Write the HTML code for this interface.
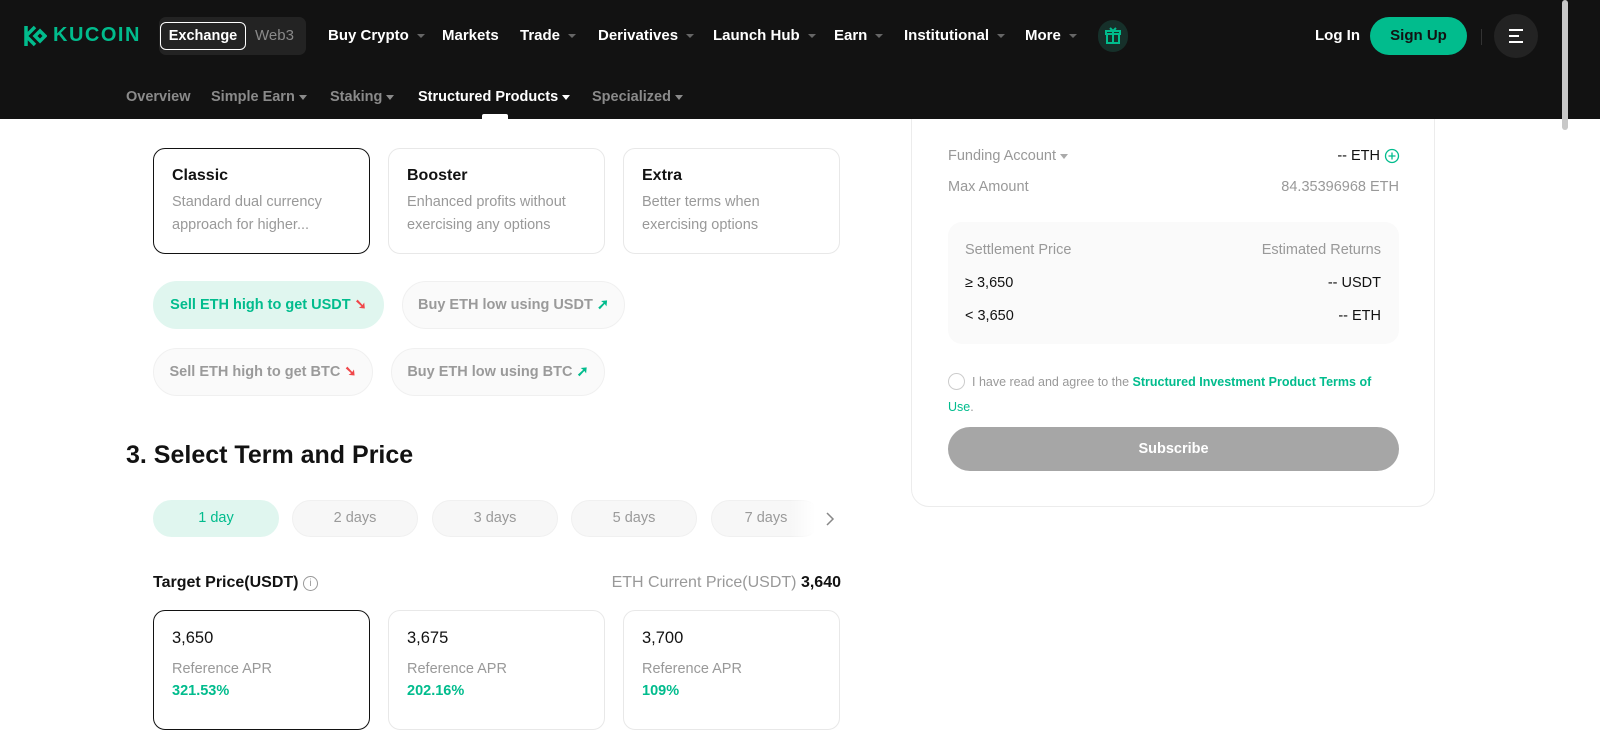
<!DOCTYPE html>
<html><head><meta charset="utf-8"><style>
*{box-sizing:border-box;margin:0;padding:0}
body{width:1600px;height:720px;overflow:hidden;background:#fff;font-family:"Liberation Sans",Arial,sans-serif;position:relative;color:#121212}
.hdr{position:absolute;left:0;top:0;width:1600px;height:119px;background:#121212}
.a{position:absolute;white-space:nowrap}
.nav{color:#fff;font-size:15px;font-weight:bold;top:27px}
.car{display:inline-block;width:0;height:0;border-left:4px solid transparent;border-right:4px solid transparent;border-top:4px solid #666;margin-left:8px;vertical-align:middle}
.sub{top:89px;font-size:14.5px;color:#8a8a8a;font-weight:bold}
.subc{display:inline-block;width:0;height:0;border-left:4px solid transparent;border-right:4px solid transparent;border-top:5px solid #8a8a8a;margin-left:4px;vertical-align:middle}
.card{position:absolute;border:1px solid #e8e8e8;border-radius:12px;background:#fff}
.card.sel{border:1px solid #121212}
.ct{position:absolute;left:18px;top:18px;font-size:16px;font-weight:bold;color:#121212}
.cd{position:absolute;left:18px;top:42px;font-size:14.5px;color:#999;line-height:23px}
.pill{position:absolute;height:48px;border-radius:24px;background:#fafafa;border:1px solid #f0f0f0;font-size:14.5px;font-weight:bold;color:#9a9a9a;line-height:46px;text-align:center}
.tp{position:absolute;top:500px;width:126px;height:37px;border-radius:19px;background:#f7f7f7;border:1px solid #f0f0f0;font-size:14.5px;color:#9a9a9a;line-height:35px;text-align:center}
.g{color:#01bc8d}
.rl{position:absolute;font-size:14.5px;white-space:nowrap}
</style></head><body>
<div class="a" style="left:911px;top:90px;width:524px;height:417px;border:1px solid #ececec;border-radius:18px"></div>
<div class="hdr"></div>
<svg class="a" style="left:23px;top:24px" width="24" height="24" viewBox="0 0 24 24"><path d="M3 2v20M3 12L12 3M3 12l9 9M12 12l5-5 5 5-5 5z" stroke="#01bc8d" stroke-width="3.5" fill="none"/></svg>
<div class="a" style="left:53px;top:24px;color:#01bc8d;font-size:20px;font-weight:bold;letter-spacing:1.5px">KUCOIN</div>
<div class="a" style="left:159px;top:17px;width:147px;height:38px;background:#232323;border-radius:7px"></div>
<div class="a" style="left:160px;top:22px;width:86px;height:28px;border:1.5px solid #fff;border-radius:6px;color:#fff;font-size:14.5px;font-weight:bold;text-align:center;line-height:26px">Exchange</div>
<div class="a" style="left:255px;top:27px;color:#8a8a8a;font-size:15px">Web3</div>
<div class="a nav" style="left:328px">Buy Crypto<span class="car"></span></div>
<div class="a nav" style="left:442px">Markets</div>
<div class="a nav" style="left:520px">Trade<span class="car"></span></div>
<div class="a nav" style="left:598px">Derivatives<span class="car"></span></div>
<div class="a nav" style="left:713px">Launch Hub<span class="car"></span></div>
<div class="a nav" style="left:834px">Earn<span class="car"></span></div>
<div class="a nav" style="left:904px">Institutional<span class="car"></span></div>
<div class="a nav" style="left:1025px">More<span class="car"></span></div>
<div class="a" style="left:1098px;top:20px;width:30px;height:32px;border-radius:15px;background:#16302a"></div>
<svg class="a" style="left:1104px;top:27px" width="18" height="18" viewBox="0 0 18 18"><path d="M3 7h12v9H3zM2 4h14v3H2zM9 4v12M6 1l3 3 3-3" stroke="#01bc8d" stroke-width="2" fill="none"/></svg>
<div class="a nav" style="left:1315px;color:#fff">Log In</div>
<div class="a" style="left:1370px;top:17px;width:97px;height:38px;border-radius:19px;background:#01bc8d;color:#121212;font-size:15px;font-weight:bold;text-align:center;line-height:38px">Sign Up</div>
<div class="a" style="left:1481px;top:29px;width:1px;height:16px;background:#333"></div>
<div class="a" style="left:1494px;top:14px;width:44px;height:44px;border-radius:22px;background:#232323"></div>
<div class="a" style="left:1509px;top:29px;width:14px;height:2px;background:#fff"></div>
<div class="a" style="left:1509px;top:35px;width:10px;height:2px;background:#fff"></div>
<div class="a" style="left:1509px;top:41px;width:14px;height:2px;background:#fff"></div>
<div class="a sub" style="left:126px">Overview</div>
<div class="a sub" style="left:211px">Simple Earn<span class="subc"></span></div>
<div class="a sub" style="left:330px">Staking<span class="subc"></span></div>
<div class="a sub" style="left:418px;color:#fff">Structured Products<span class="subc" style="border-top-color:#fff"></span></div>
<div class="a sub" style="left:592px">Specialized<span class="subc"></span></div>
<div class="a" style="left:482px;top:114px;width:26px;height:5px;background:#fff;border-radius:2px 2px 0 0"></div>
<div class="a" style="left:1562px;top:0;width:6px;height:130px;background:#c8c8c8;border-radius:3px"></div>

<div class="card sel" style="left:153px;top:148px;width:217px;height:106px"><div class="ct">Classic</div><div class="cd">Standard dual currency<br>approach for higher...</div></div>
<div class="card" style="left:388px;top:148px;width:217px;height:106px"><div class="ct">Booster</div><div class="cd">Enhanced profits without<br>exercising any options</div></div>
<div class="card" style="left:623px;top:148px;width:217px;height:106px"><div class="ct">Extra</div><div class="cd">Better terms when<br>exercising options</div></div>

<div class="pill" style="left:153px;top:281px;width:231px;background:#e0f6ef;border-color:#e0f6ef;color:#01bc8d">Sell ETH high to get USDT <span style="color:#f0474a">➘</span></div>
<div class="pill" style="left:402px;top:281px;width:223px">Buy ETH low using USDT <span class="g">➚</span></div>
<div class="pill" style="left:153px;top:348px;width:220px">Sell ETH high to get BTC <span style="color:#f0474a">➘</span></div>
<div class="pill" style="left:391px;top:348px;width:214px">Buy ETH low using BTC <span class="g">➚</span></div>

<div class="a" style="left:126px;top:441px;font-size:25px;font-weight:bold;color:#121212">3. Select Term and Price</div>
<div class="tp" style="left:153px;background:#e0f6ef;border-color:#e0f6ef;color:#01bc8d">1 day</div>
<div class="tp" style="left:292px">2 days</div>
<div class="tp" style="left:432px">3 days</div>
<div class="tp" style="left:571px">5 days</div>
<div class="tp" style="left:711px;width:110px">7 days</div>
<div class="a" style="left:790px;top:498px;width:50px;height:40px;background:linear-gradient(90deg,rgba(255,255,255,0),#fff 50%)"></div>
<svg class="a" style="left:824px;top:511px" width="12" height="16"><path d="M3 2l6 6-6 6" stroke="#888" stroke-width="1.5" fill="none"/></svg>

<div class="a" style="left:153px;top:574px;font-size:16px;font-weight:bold">Target Price(USDT) <span style="display:inline-block;width:15px;height:15px;border:1px solid #999;border-radius:50%;font-size:10px;color:#999;text-align:center;line-height:13px;font-weight:normal;vertical-align:1px">i</span></div>
<div class="a" style="right:759px;top:574px;font-size:16px;color:#999">ETH Current Price(USDT) <span style="color:#121212;font-weight:bold">3,640</span></div>

<div class="card sel" style="left:153px;top:610px;width:217px;height:120px"><div class="ct" style="font-weight:normal;font-size:16.5px">3,650</div><div class="cd" style="top:47px">Reference APR</div><div class="a g" style="left:18px;top:72px;font-size:14.5px;font-weight:bold">321.53%</div></div>
<div class="card" style="left:388px;top:610px;width:217px;height:120px"><div class="ct" style="font-weight:normal;font-size:16.5px">3,675</div><div class="cd" style="top:47px">Reference APR</div><div class="a g" style="left:18px;top:72px;font-size:14.5px;font-weight:bold">202.16%</div></div>
<div class="card" style="left:623px;top:610px;width:217px;height:120px"><div class="ct" style="font-weight:normal;font-size:16.5px">3,700</div><div class="cd" style="top:47px">Reference APR</div><div class="a g" style="left:18px;top:72px;font-size:14.5px;font-weight:bold">109%</div></div>

<div class="rl" style="left:948px;top:148px;color:#999">Funding Account<span class="subc" style="border-top-color:#aaa"></span></div>
<div class="rl" style="right:220px;top:148px">-- ETH</div>
<svg class="a" style="left:1384px;top:148px" width="16" height="16"><circle cx="8" cy="8" r="6.5" stroke="#01bc8d" stroke-width="1.3" fill="none"/><path d="M8 4.5v7M4.5 8h7" stroke="#01bc8d" stroke-width="1.3"/></svg>
<div class="rl" style="left:948px;top:179px;color:#999">Max Amount</div>
<div class="rl" style="right:201px;top:179px;color:#999">84.35396968 ETH</div>
<div class="a" style="left:948px;top:222px;width:451px;height:122px;background:#fafafa;border-radius:14px"></div>
<div class="rl" style="left:965px;top:242px;color:#999">Settlement Price</div>
<div class="rl" style="right:219px;top:242px;color:#999">Estimated Returns</div>
<div class="rl" style="left:965px;top:275px">≥ 3,650</div>
<div class="rl" style="right:219px;top:275px">-- USDT</div>
<div class="rl" style="left:965px;top:308px">&lt; 3,650</div>
<div class="rl" style="right:219px;top:308px">-- ETH</div>
<div class="a" style="left:948px;top:373px;width:17px;height:17px;border:1.5px solid #ccc;border-radius:50%"></div>
<div class="a" style="left:972px;top:375px;font-size:12.5px;color:#999">I have read and agree to the <span class="g" style="font-weight:bold">Structured Investment Product Terms of</span></div>
<div class="a g" style="left:948px;top:400px;font-size:12.5px">Use<span style="color:#999">.</span></div>
<div class="a" style="left:948px;top:427px;width:451px;height:44px;border-radius:22px;background:#a6a6a6;color:#fff;font-size:14.5px;font-weight:bold;text-align:center;line-height:44px">Subscribe</div>
</body></html>
